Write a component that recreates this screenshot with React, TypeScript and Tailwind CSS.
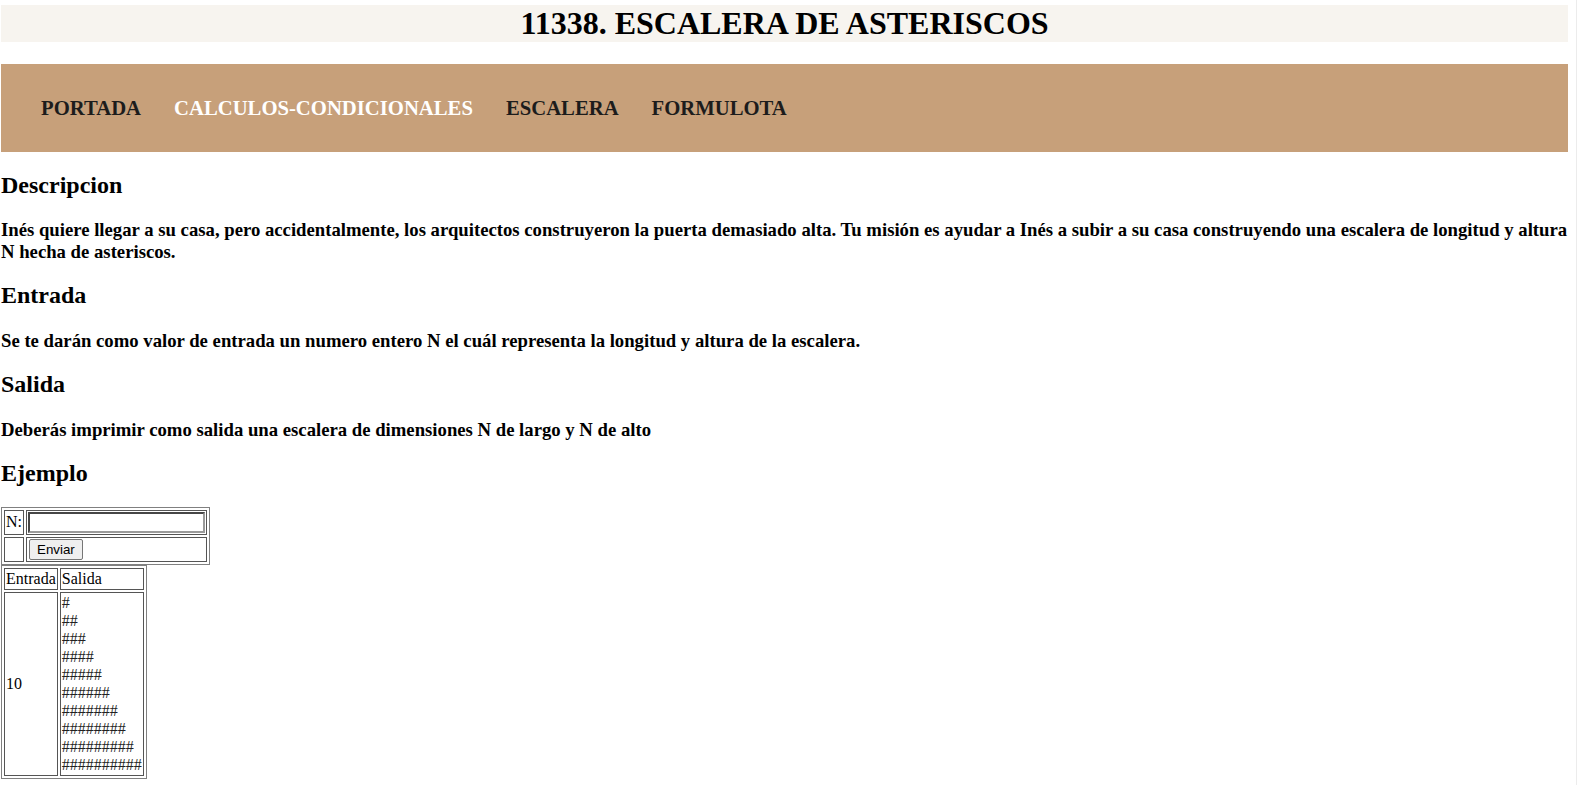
const navItems = [
  { label: "PORTADA", active: false },
  { label: "CALCULOS-CONDICIONALES", active: true },
  { label: "ESCALERA", active: false },
  { label: "FORMULOTA", active: false },
];

const serif = "font-['Liberation_Serif','Times_New_Roman',serif]";

function Section({ title, children }: { title: string; children: React.ReactNode }) {
  return (
    <>
      <h2 className="text-[24px] font-bold leading-[1.15] my-[19.92px]">{title}</h2>
      <h3 className="text-[18.72px] font-bold leading-[1.15] my-[18.72px]">{children}</h3>
    </>
  );
}

export default function App() {
  const n = 10;
  const rows = Array.from({ length: n }, (_, i) => "#".repeat(i + 1));

  return (
    <div className={`flex min-h-screen bg-white text-black ${serif}`}>
      <div className="w-[1567px] ml-px pt-[5px] flow-root">
        <h1 className="bg-[#f7f4ef] text-center text-[32px] font-bold leading-[1.15] h-[37px]">
          11338. ESCALERA DE ASTERISCOS
        </h1>

        <nav className="mt-[22px] h-[88px] bg-[#c7a07a] flex items-center pl-[40px] pt-[2px] gap-[33px]">
          {navItems.map((item) => (
            <a
              key={item.label}
              href="#"
              className={`text-[20.7px] font-bold leading-[1.15] ${item.active ? "text-white" : "text-[#1c1c1c]"}`}
            >
              {item.label}
            </a>
          ))}
        </nav>

        <Section title="Descripcion">
          Inés quiere llegar a su casa, pero accidentalmente, los arquitectos construyeron la puerta demasiado alta. Tu misión es ayudar a Inés a subir a su casa construyendo una escalera de longitud y altura N hecha de asteriscos.
        </Section>
        <Section title="Entrada">
          Se te darán como valor de entrada un numero entero N el cuál representa la longitud y altura de la escalera.
        </Section>
        <Section title="Salida">
          Deberás imprimir como salida una escalera de dimensiones N de largo y N de alto
        </Section>
        <h2 className="text-[24px] font-bold leading-[1.15] mt-[19.92px] mb-[19px]">Ejemplo</h2>

        <form onSubmit={(e) => e.preventDefault()}>
          <table className="border-separate border-spacing-[2px] border border-[#808080] text-[16px] leading-[1.15]">
            <tbody>
              <tr>
                <td className="border border-[#555] p-px">N:</td>
                <td className="border border-[#555] p-px">
                  <input
                    type="text"
                    className="block w-[177px] h-[21px] border-2 [border-style:inset] border-[#9a9a9a] bg-white px-[2px] text-[13.33px] font-['Liberation_Sans',Arial,sans-serif] outline-none"
                  />
                </td>
              </tr>
              <tr>
                <td className="border border-[#555] p-px"></td>
                <td className="border border-[#555] p-px">
                  <button
                    type="submit"
                    className="block h-[21px] ml-px px-[7px] bg-[#efefef] border border-[#767676] rounded-[2px] text-[13.33px] leading-none text-black font-['Liberation_Sans',Arial,sans-serif]"
                  >
                    Enviar
                  </button>
                </td>
              </tr>
            </tbody>
          </table>
        </form>

        <table className="border-separate border-spacing-[2px] border border-[#808080] text-[16px] leading-[1.15]">
          <tbody>
            <tr>
              <td className="border border-[#555] p-px">Entrada</td>
              <td className="border border-[#555] p-px">Salida</td>
            </tr>
            <tr>
              <td className="border border-[#555] p-px align-middle">{n}</td>
              <td className="border border-[#555] p-px text-[#222] leading-[18px]">
                {rows.map((r) => (
                  <div key={r}>{r}</div>
                ))}
              </td>
            </tr>
          </tbody>
        </table>
      </div>
      <div className="flex-1 border-r border-[#ececec]" />
    </div>
  );
}
